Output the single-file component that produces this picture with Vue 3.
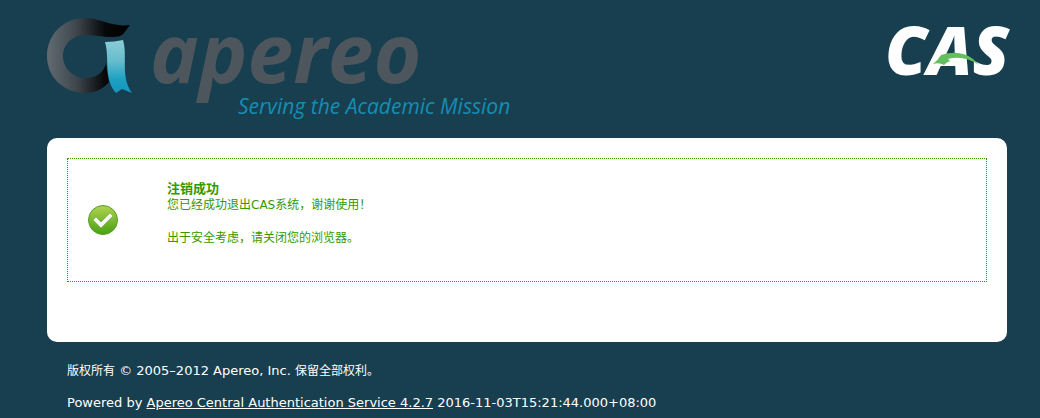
<template>
  <div class="page">
    <header class="header">
      <a class="logo" href="#" aria-label="Apereo">
        <svg width="480" height="110" viewBox="0 0 480 110">
          <defs>
            <linearGradient id="ring" x1="0" y1="0" x2="1" y2="0">
              <stop offset="0" stop-color="#626a72" />
              <stop offset="0.35" stop-color="#3f474e" />
              <stop offset="0.7" stop-color="#070809" />
              <stop offset="1" stop-color="#000" />
            </linearGradient>
            <linearGradient id="ribbon" x1="0" y1="0" x2="0" y2="1">
              <stop offset="0" stop-color="#8bccd5" />
              <stop offset="0.4" stop-color="#65bdcd" />
              <stop offset="0.75" stop-color="#1c9fc2" />
              <stop offset="1" stop-color="#1496bd" />
            </linearGradient>
          </defs>
          <path
            fill="url(#ring)"
            fill-rule="evenodd"
            d="M83 15 C77 16 67 15 58 12 C51 10 45 8 38 8 C16 8 0 25 0 46 C0 67 17 83 38 83 C48 83 56 79 62 72 L59 53 C57 62 50 68 38 68 C26 68 16 58 16 46 C16 34 26 25 38 25 C48 25 55 27 64 27 C71 27 75 26 77 23 Z"
          />
          <path
            fill="url(#ribbon)"
            d="M58 32 Q67 32 76 30 C81 47 73 66 85 83 L75 79 L69 83 C56 68 63 49 58 32 Z"
          />
          <text class="name" x="103" y="73">apereo</text>
          <text class="slogan" x="191" y="104">Serving the Academic Mission</text>
        </svg>
      </a>
      <a class="logo" href="#" aria-label="CAS">
        <svg width="119" height="76" viewBox="0 0 119 76">
          <text class="cas" x="-3" y="65">CAS</text>
          <path fill="#66bf5f" d="M45 54 Q50 50 53 45 Q72 39 85 49 L91 55 Q76 45 60 49 L62 51 Q59 52 56 55 Q51 52 45 54 Z" />
        </svg>
      </a>
    </header>

    <main class="content">
      <div class="success">
        <svg class="check" width="32" height="32" viewBox="0 0 32 32">
          <defs>
            <linearGradient id="green" x1="0" y1="0" x2="0" y2="1">
              <stop offset="0" stop-color="#b0d44e" />
              <stop offset="1" stop-color="#48a014" />
            </linearGradient>
          </defs>
          <circle cx="16" cy="16" r="14.5" fill="url(#green)" stroke="#579f26" />
          <path fill="#f5f5f5" stroke="#7aa64a" stroke-width="0.6" d="M6 16 L9 13 L14 18 L23 9 L26 12 L14 24 Z" />
        </svg>
        <div>
          <h2>注销成功</h2>
          <p>您已经成功退出CAS系统，谢谢使用！</p>
          <p>出于安全考虑，请关闭您的浏览器。</p>
        </div>
      </div>
    </main>

    <footer class="footer">
      <p><span class="zh">版权所有</span> &copy; 2005–2012 Apereo, Inc. <span class="zh">保留全部权利。</span></p>
      <p>Powered by <a href="#">Apereo Central Authentication Service 4.2.7</a> 2016-11-03T15:21:44.000+08:00</p>
    </footer>
  </div>
</template>

<script setup>
</script>

<style>
body {
  margin: 0;
  background: #173f50;
}
</style>

<style scoped>
.page {
  padding: 10px 33px 7px 47px;
  font-family: Verdana, "DejaVu Sans", "Noto Sans CJK SC", sans-serif;
  font-size: 12px;
  line-height: 16px;
}
.header {
  display: flex;
  justify-content: space-between;
  align-items: flex-start;
  margin-bottom: 18px;
}
.logo {
  display: block;
}
.logo svg {
  display: block;
  overflow: visible;
}
.name {
  font: italic 700 82px "Open Sans", sans-serif;
  fill: #4d565d;
}
.slogan {
  font: italic 400 21px "Open Sans", sans-serif;
  fill: #168db3;
}
.cas {
  font: italic 800 67px "Open Sans", sans-serif;
  fill: #fff;
}
.content {
  padding: 20px 20px 60px;
  background: #fff;
  border-radius: 10px;
}
.success {
  display: flex;
  gap: 48px;
  padding: 21px 20px 35px;
  border: 1px dotted #390;
  color: #390;
}
.check {
  flex: none;
  margin-top: 24px;
  margin-left: -1px;
}
h2 {
  margin: 0;
  font-size: 13px;
  line-height: 17px;
}
.success p {
  margin: 0 0 17px;
}
.success p:last-child {
  margin: 0;
}
.footer {
  padding: 21px 20px 0;
  color: #fff;
  font-size: 13px;
}
.footer p {
  margin: 0 0 16px;
}
.footer p:last-child {
  margin: 0;
}
.footer a {
  color: #fff;
}
.zh {
  font-size: 12px;
}
</style>
